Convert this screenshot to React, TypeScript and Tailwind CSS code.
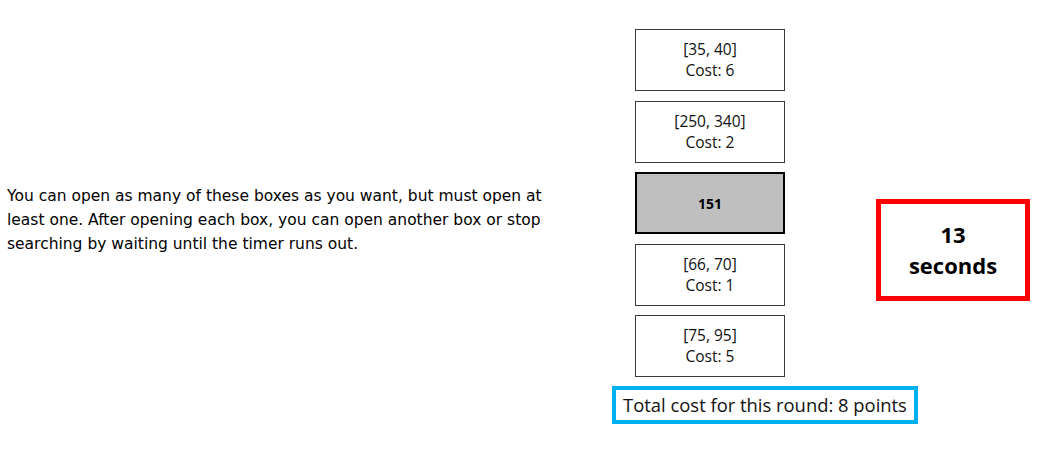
import React from "react";

const boxes = [
  { range: "[35, 40]", cost: "Cost: 6" },
  { range: "[250, 340]", cost: "Cost: 2" },
  null,
  { range: "[66, 70]", cost: "Cost: 1" },
  { range: "[75, 95]", cost: "Cost: 5" },
];

export default function App() {
  return (
    <div className="w-[1057px] h-[467px] bg-white text-black overflow-hidden grid grid-cols-[612px_173px_1fr] grid-rows-[auto_auto] content-start">
      <div className="pl-[7px] pt-[184px]">
        <p
          className="text-[15.5px] leading-[24px] text-black w-[580px]"
          style={{ fontFamily: '"DejaVu Sans", sans-serif' }}
        >
          You can open as many of these boxes as you want, but must open at
          <br />
          least one. After opening each box, you can open another box or stop
          <br />
          searching by waiting until the timer runs out.
        </p>
      </div>
      <div className="flex flex-col gap-[9.5px] pl-[23px] pt-[29px]">
        {boxes.map((b, i) =>
          b ? (
            <div
              key={i}
              className="w-[150px] h-[62px] border-[1.5px] border-[#3a3a3a] bg-white flex flex-col items-center justify-center text-[15.5px] leading-[21px] text-[#111]"
              style={{ fontFamily: '"Open Sans", sans-serif' }}
            >
              <span>{b.range}</span>
              <span>{b.cost}</span>
            </div>
          ) : (
            <div
              key={i}
              className="w-[150px] h-[62px] border-2 border-black bg-[#bfbfbf] flex items-center justify-center text-[14px] font-bold"
              style={{ fontFamily: '"Open Sans", sans-serif' }}
            >
              151
            </div>
          )
        )}
      </div>
      <div className="pl-[91px] pt-[199px]">
        <div
          className="w-[154px] h-[102px] border-[5px] border-[#ff0000] flex flex-col items-center justify-center text-[22px] leading-[31px] font-bold"
          style={{ fontFamily: '"Open Sans", sans-serif' }}
        >
          <span>13</span>
          <span>seconds</span>
        </div>
      </div>
      <div className="col-start-2 col-span-2 pt-[9px]">
        <div
          className="w-[306px] h-[38px] border-4 border-[#00b0f0] flex items-center justify-center text-[18.4px] text-[#111]"
          style={{ fontFamily: '"Open Sans", sans-serif' }}
        >
          Total cost for this round: 8 points
        </div>
      </div>
    </div>
  );
}
